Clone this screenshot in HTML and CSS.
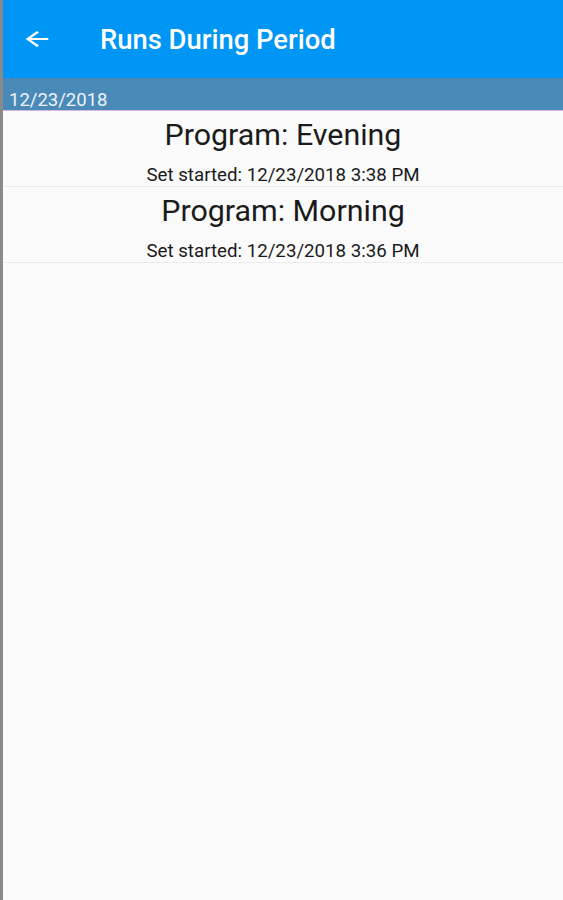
FILE: index.html
```html
<!DOCTYPE html>
<html lang="en">
<head>
    <meta charset="UTF-8">
    <meta name="viewport" content="width=device-width, initial-scale=1.0">
    <title>Runs During Period</title>
    <link rel="stylesheet" href="styles.css">
</head>
<body>
    <div class="screen">
        <header class="toolbar">
            <span class="back">
                <svg width="34" height="24" viewBox="0 0 24 24" preserveAspectRatio="none">
                    <path d="M20 11H7.83l5.59-5.59L12 4l-8 8 8 8 1.41-1.41L7.83 13H20v-2z" fill="white"/>
                </svg>
            </span>
            <h1>Runs During Period</h1>
        </header>
        <div class="group">12/23/2018</div>
        <ul class="runs">
            <li>
                <div class="name">Program: Evening</div>
                <div class="started">Set started: 12/23/2018 3:38 PM</div>
            </li>
            <li>
                <div class="name">Program: Morning</div>
                <div class="started">Set started: 12/23/2018 3:36 PM</div>
            </li>
        </ul>
    </div>
</body>
</html>
```

FILE: styles.css
```css
html, body {
    margin: 0;
    height: 100%;
}
body {
    font-family: Roboto, "Noto Sans", sans-serif;
    background-color: #fafafa;
}
.screen {
    min-height: 100%;
    border-left: 3px solid #8a8a8a;
    box-sizing: border-box;
}
.toolbar {
    display: flex;
    align-items: center;
    height: 78px;
    background-color: #0096f5;
    color: white;
}
.back {
    display: flex;
    width: 34px;
    margin-left: 17px;
}
.toolbar h1 {
    margin: 0 0 0 46px;
    font-size: 27.4px;
    font-weight: 500;
    padding-top: 2px;
}
.group {
    height: 29px;
    padding-top: 3px;
    line-height: 38px;
    padding-left: 6px;
    background-color: #4a8ab8;
    color: #eef3f8;
    font-size: 18.5px;
    border-bottom: 1px solid #d8b8e0;
    overflow: hidden;
}
.runs {
    list-style: none;
    margin: 0;
    padding: 0;
}
.runs li {
    height: 75px;
    border-bottom: 1px solid #ececec;
    text-align: center;
    color: #1a1a1a;
}
.name {
    font-size: 30.4px;
    padding-top: 6px;
    line-height: 36px;
}
.started {
    font-size: 18.7px;
    line-height: 20px;
    margin-top: 12px;
}
```
